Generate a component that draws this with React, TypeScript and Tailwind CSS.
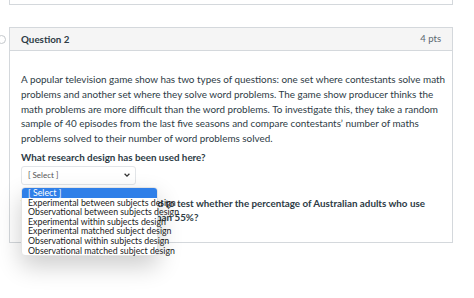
import * as React from "react"

const options = [
    "[ Select ]",
    "Experimental between subjects design",
    "Observational between subjects design",
    "Experimental within subjects design",
    "Experimental matched subject design",
    "Observational within subjects design",
    "Observational matched subject design",
]

export default function App() {
    return (
        <div className="min-h-screen bg-white text-[#2d3b45]" style={{fontFamily: "Lato, 'Noto Sans', sans-serif"}}>
            <div className="ml-[9px] w-[444px] h-[5px] border-x border-b border-[#d4d8dc]"></div>

            <div className="relative mt-[22px] ml-[9px] w-[444px] border border-[#d4d8dc]">
                <div className="absolute -left-[13px] top-[7px] w-[9px] h-[9px] rounded-full border border-[#c4c8cc] bg-white"></div>

                <div className="h-[23px] flex items-center justify-between px-[11px] bg-[#f5f5f5] border-b border-[#d4d8dc]">
                    <span className="text-[9.8px] font-bold">Question 2</span>
                    <span className="text-[9.5px] text-[#5a6670]">4 pts</span>
                </div>

                <div className="px-[11px] pt-[21px] pb-[18px]">
                    <p className="text-[9.9px] leading-[14.8px] whitespace-nowrap">
                        A popular television game show has two types of questions: one set where contestants solve math<br />
                        problems and another set where they solve word problems. The game show producer thinks the<br />
                        math problems are more difficult than the word problems. To investigate this, they take a random<br />
                        sample of 40 episodes from the last five seasons and compare contestants’ number of maths<br />
                        problems solved to their number of word problems solved.
                    </p>
                    <p className="mt-[4px] text-[9.8px] leading-[15px] font-bold">What research design has been used here?</p>

                    <div className="relative mt-[1px]">
                        <div className="w-[115px] h-[19px] flex items-center justify-between pl-[6px] pr-[4px] border border-[#e2e5e8] rounded-[3px] bg-white">
                            <span className="text-[8px] text-[#555]">[ Select ]</span>
                            <svg width="8" height="8" viewBox="0 0 10 10" fill="none" stroke="#333" strokeWidth="1.6">
                                <path d="M2 3.5 5 6.5 8 3.5" />
                            </svg>
                        </div>

                        <div className="absolute left-0 top-[21px] z-10 w-[137px] bg-white rounded-[4px] border border-[#e4e4e4] shadow-[0_10px_24px_rgba(0,0,0,0.2)]">
                            {options.map((o, i) => (
                                <div
                                    key={o}
                                    className={
                                        i === 0
                                            ? "h-[9.6px] leading-[9.6px] px-[6px] text-[8.8px] text-white bg-[#2f7fe8] rounded-t-[3px]"
                                            : "h-[9.6px] leading-[9.6px] px-[6px] text-[8.8px] text-[#222] whitespace-nowrap"
                                    }
                                >
                                    {o}
                                </div>
                            ))}
                        </div>

                        <p className="mt-[11px] text-[9.8px] leading-[14px] font-bold whitespace-nowrap">
                            What type of test would be used to test whether the percentage of Australian adults who use<br />
                            social media weekly is greater than 55%?
                        </p>
                    </div>
                </div>
            </div>
        </div>
    )
}
